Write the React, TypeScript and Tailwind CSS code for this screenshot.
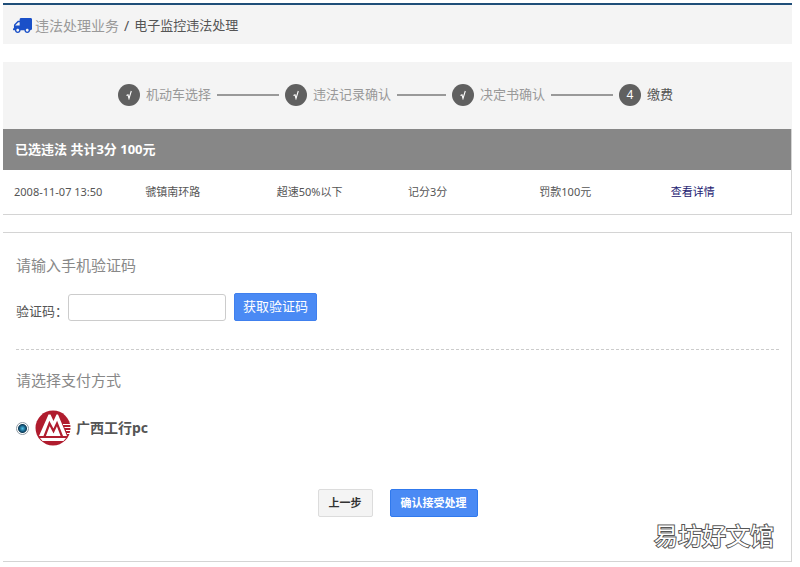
import { useState } from "react";
import { FaTruck } from "react-icons/fa";

const steps = [
  { label: "机动车选择", done: true },
  { label: "违法记录确认", done: true },
  { label: "决定书确认", done: true },
  { label: "缴费", done: false },
];

const records = [
  {
    time: "2008-11-07 13:50",
    place: "虢镇南环路",
    reason: "超速50%以下",
    points: "记分3分",
    fine: "罚款100元",
  },
];

function BankLogo() {
  return (
    <svg viewBox="0 0 36 36" className="ml-1.5 size-9 shrink-0" aria-hidden="true">
      <circle cx="18" cy="18" r="17.5" fill="#b01c2e" />
      <path d="M4 26 L13.5 4.5 H15.5 L18.5 11 L21.5 4.5 H23 L32 26 Z" fill="#fff" />
      <path
        d="M9.5 26.5 L14.5 13.5 L18.5 21 L22 13.5 L27 26.5"
        fill="none"
        stroke="#b01c2e"
        strokeWidth="2.2"
      />
      <path d="M5 28 H31 L28.5 31 H7.5 Z" fill="#fff" />
      <path
        d="M28 14.5 H36 M29.5 17.5 H36 M31 20.5 H36 M32 23.5 H35"
        stroke="#fff"
        strokeWidth="1"
      />
    </svg>
  );
}

function Tick() {
  return (
    <svg viewBox="0 0 8 10" className="h-2.5 w-2" aria-hidden="true">
      <path d="M1.5 5.5 L3 4.8 L4 8.5 L6.3 1" fill="none" stroke="#fff" strokeWidth="1.1" />
    </svg>
  );
}

function Steps() {
  return (
    <ol className="flex justify-center bg-[#f4f4f4] pt-[22px] pr-1 pb-[23px] text-[13px]">
      {steps.map((step, idx) => (
        <li
          key={step.label}
          className={idx < steps.length - 1 ? "flex w-[167px] items-center" : "flex items-center"}
        >
          <span className="flex size-[22px] shrink-0 items-center justify-center rounded-full bg-[#606060] text-xs text-white">
            {step.done ? <Tick /> : idx + 1}
          </span>
          <span
            className={
              step.done
                ? "ml-1.5 whitespace-nowrap text-[#999]"
                : "ml-1.5 whitespace-nowrap text-[#555]"
            }
          >
            {step.label}
          </span>
          {idx < steps.length - 1 && <span className="mx-1.5 h-0.5 flex-1 bg-[#999]" />}
        </li>
      ))}
    </ol>
  );
}

export default function App() {
  const [code, setCode] = useState("");

  return (
    <div className="relative bg-white pt-[3px] pr-2 pb-1.5 pl-[3px] font-['Noto_Sans','Noto_Sans_CJK_SC',sans-serif] text-[#555]">
      <header className="flex h-[41px] items-center border-t-2 border-[#1f4e79] bg-[#f4f4f4] pt-0.5 pl-2.5">
        <FaTruck className="-scale-x-100 text-[19px] text-[#1a50c8]" />
        <h1 className="ml-[3px] text-sm text-[#999]">违法处理业务</h1>
        <span className="mx-[5px] text-sm">/</span>
        <span className="text-[13px]">电子监控违法处理</span>
      </header>

      <main className="mt-[18px]">
        <Steps />

        <section className="border-r border-b border-[#d4d4d4]">
          <h2 className="h-[41px] bg-[#878787] pl-3 text-[13px] leading-[41px] font-bold text-white">
            已选违法 共计3分 100元
          </h2>
          <table className="h-[44px] w-full table-fixed text-[11px]">
            <tbody>
              {records.map((r) => (
                <tr key={r.time}>
                  <td className="pl-[11px]">{r.time}</td>
                  <td className="pl-[11px]">{r.place}</td>
                  <td className="pl-[11px]">{r.reason}</td>
                  <td className="pl-[11px]">{r.points}</td>
                  <td className="pl-[11px]">{r.fine}</td>
                  <td className="pl-[11px]">
                    <a href="#detail" className="text-[#1a2070]">
                      查看详情
                    </a>
                  </td>
                </tr>
              ))}
            </tbody>
          </table>
        </section>

        <form
          onSubmit={(e) => e.preventDefault()}
          className="mt-[17px] border border-l-0 border-[#d4d4d4] pt-5 pr-3 pb-11 pl-[13px]"
        >
          <h3 className="text-[15px] leading-6 text-[#888]">请输入手机验证码</h3>
          <div className="mt-4 flex items-center pb-7">
            <label htmlFor="code" className="pt-2 text-[13px] leading-5">
              验证码：
            </label>
            <input
              id="code"
              type="text"
              value={code}
              onChange={(e) => setCode(e.target.value)}
              className="h-[27px] w-[158px] rounded-[3px] border border-[#ccc] px-2 text-[13px]"
            />
            <button
              type="button"
              className="ml-2 h-7 rounded-xs border border-[#4080ee] bg-[#4a8af4] px-2 text-[13px] text-white"
            >
              获取验证码
            </button>
          </div>

          <h3 className="border-t border-dashed border-[#ccc] pt-[18px] text-[15px] leading-6 text-[#888]">
            请选择支付方式
          </h3>
          <label className="mt-[18px] flex items-center">
            <input
              type="radio"
              name="pay"
              defaultChecked
              className="size-[13px] appearance-none rounded-full border border-[#8f9aa3] bg-[radial-gradient(circle,#4fc3e8_0,#155a80_3px,#0d3d58_4px,#fff_5px)]"
            />
            <BankLogo />
            <span className="ml-[5px] text-sm font-bold">广西工行pc</span>
          </label>

          <div className="mt-[43px] flex justify-center gap-[17px] text-[11px] font-bold">
            <button
              type="button"
              className="h-7 rounded-xs border border-[#dcdcdc] bg-[#f4f4f4] px-2.5 text-[#333]"
            >
              上一步
            </button>
            <button
              type="submit"
              className="h-7 rounded-xs border border-[#3079ed] bg-[#4a8af4] px-2.5 text-white"
            >
              确认接受处理
            </button>
          </div>
        </form>
      </main>

      <span className="absolute right-[26px] bottom-[14px] text-2xl leading-9 text-white [paint-order:stroke_fill] [-webkit-text-stroke:2px_#555]">
        易坊好文馆
      </span>
    </div>
  );
}
